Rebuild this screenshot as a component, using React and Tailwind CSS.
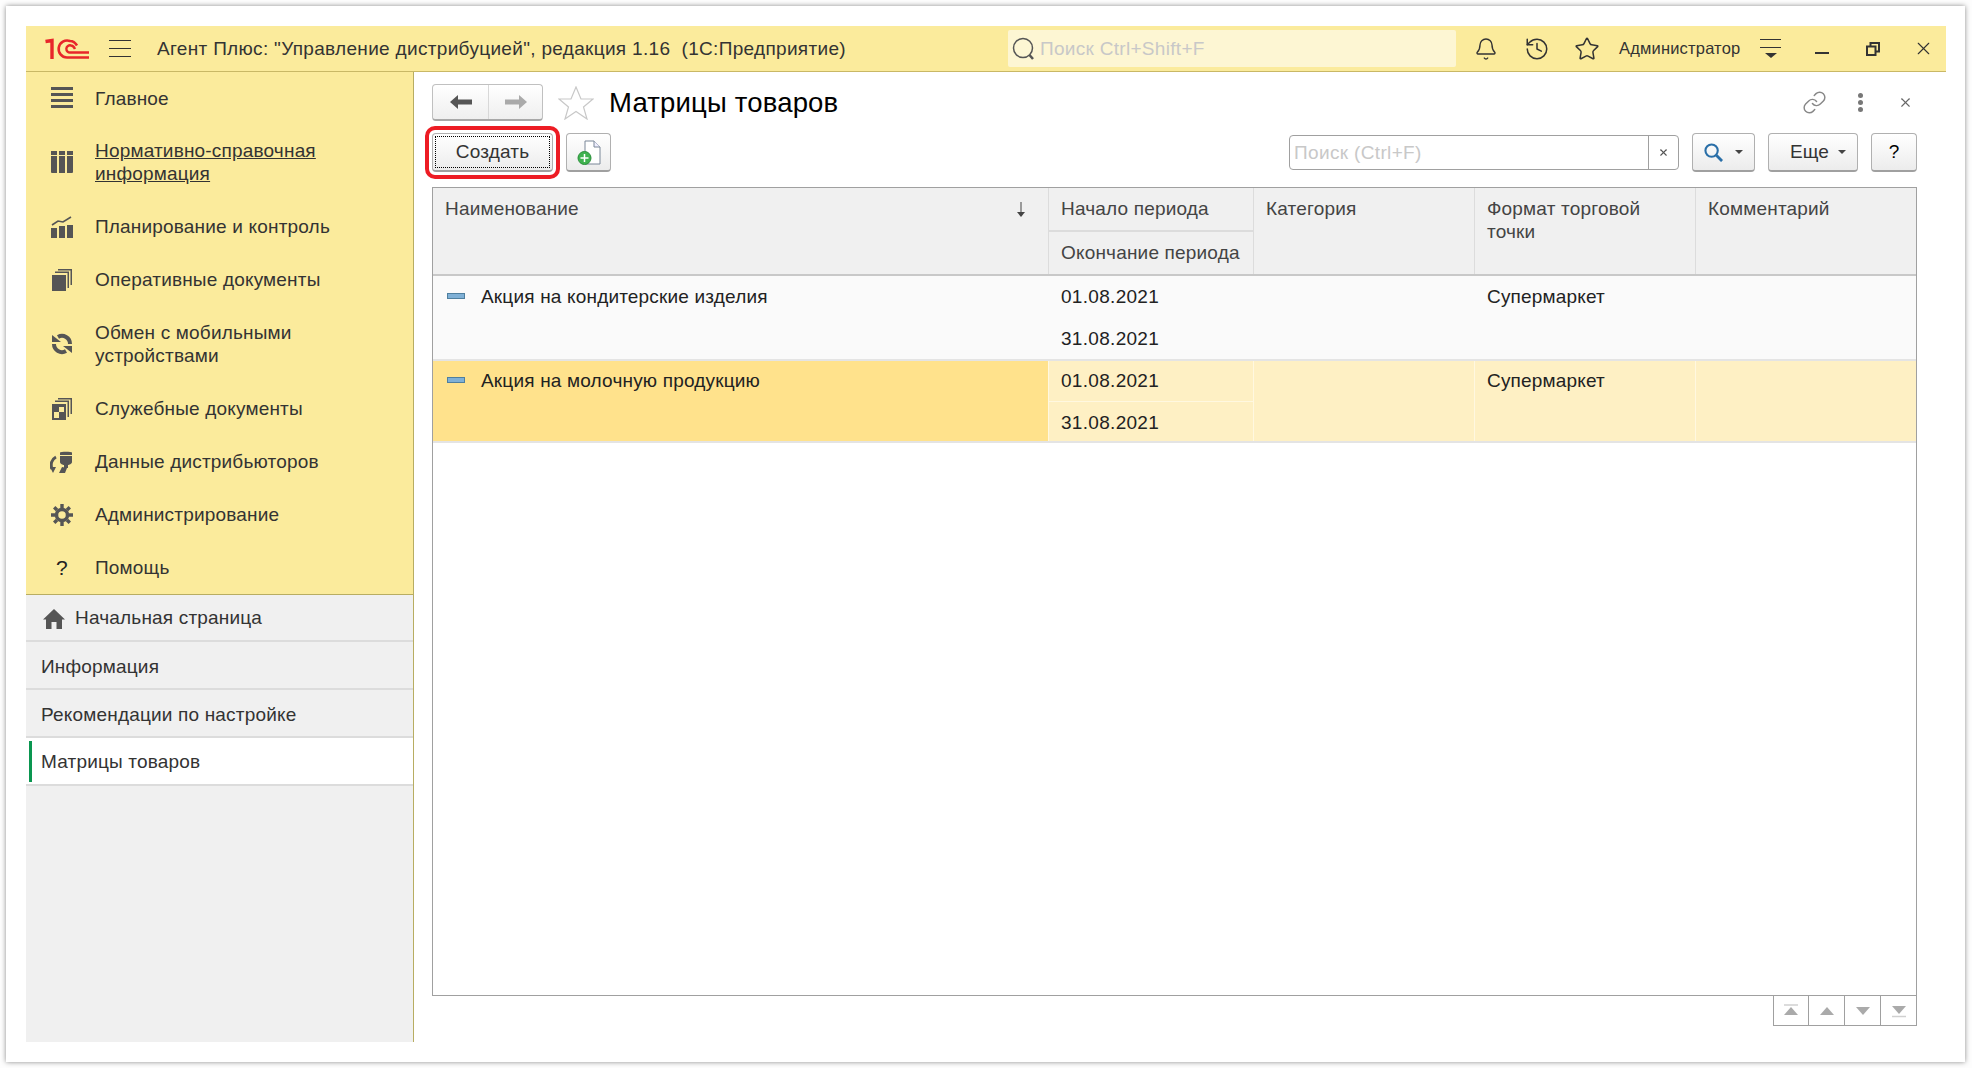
import { Bell, History, Star, Link, X } from "lucide-react";

const icons = {
  main: (
    <svg viewBox="0 0 22 22" className="w-[22px] h-[22px]" fill="#555">
      <rect y="0" width="22" height="3" />
      <rect y="6" width="22" height="3" />
      <rect y="12" width="22" height="3" />
      <rect y="18" width="22" height="3" />
    </svg>
  ),
  book: (
    <svg viewBox="0 0 22 22" className="w-[22px] h-[22px]" fill="#555">
      <path d="M0 0h6v4H0zM8 0h6v4H8zM16 0h6v4h-6z" />
      <path d="M0 5h6v17H1a1 1 0 0 1-1-1zM8 5h6v17H8zM16 5h6v16a1 1 0 0 1-1 1h-5z" />
    </svg>
  ),
  chart: (
    <svg viewBox="0 0 22 22" className="w-[22px] h-[22px]" fill="#555">
      <path d="M0 12h6v10H0zM8 10h6v12H8zM16 9h6v13h-6z" />
      <path d="M1 9l6-4 5 1 8-5" fill="none" stroke="#555" strokeWidth="1.6" />
    </svg>
  ),
  docs: (
    <svg viewBox="0 0 22 22" className="w-[22px] h-[22px]" fill="#555">
      <path d="M1 6h14v16H1z" />
      <path d="M4 4V2.500h14V19h-1.500V4zM7 1.500V0h14v16h-1.500V1.500z" />
    </svg>
  ),
  sync: (
    <svg viewBox="0 0 22 22" className="w-[22px] h-[22px]" fill="none" stroke="#555" strokeWidth="4">
      <path d="M19 11A8 8 0 0 0 7 4" />
      <path d="M3 11A8 8 0 0 0 15 18" />
      <path d="M1 2L10 9H1z" fill="#555" stroke="none" />
      <path d="M21 20L12 13h9z" fill="#555" stroke="none" />
    </svg>
  ),
  service: (
    <svg viewBox="0 0 22 22" className="w-[22px] h-[22px]" fill="#555">
      <path d="M1 6h14v16H1z" />
      <path d="M4 4V2.500h14V19h-1.500V4zM7 1.500V0h14v16h-1.500V1.500z" />
      <path d="M8 9h5v5H8zM3 14h5v6H3z" fill="#fbeb9c" />
    </svg>
  ),
  distrib: (
    <svg viewBox="0 0 24 22" className="w-[24px] h-[22px]" fill="#555">
      <path d="M10 1.500C10 .5 22 .5 22 1.500V4H10zM10 5h12v6c0 2-3 3-4 3v3h-4v-3c-1 0-4-1-4-3z" />
      <path d="M6 6C2 8 0 13 2 18" fill="none" stroke="#555" strokeWidth="3" />
      <path d="M0 16h6l-3 6zM9 22l3-6 5 1-2 5z" />
    </svg>
  ),
  gear: (
    <svg viewBox="0 0 22 22" className="w-[22px] h-[22px]" fill="none" stroke="#555">
      <circle cx="11" cy="11" r="5.500" strokeWidth="3.500" />
      <path d="M11 0v4M11 18v4M0 11h4M18 11h4M3.200 3.200l2.800 2.800M16 16l2.800 2.800M18.800 3.200L16 6M6 16l-2.800 2.800" strokeWidth="3.400" />
    </svg>
  ),
};

const menu = [
  { icon: "main", lines: ["Главное"], h: "h-[52px]" },
  { icon: "book", lines: ["Нормативно-справочная", "информация"], h: "h-[76px]", underline: true },
  { icon: "chart", lines: ["Планирование и контроль"], h: "h-[53px]" },
  { icon: "docs", lines: ["Оперативные документы"], h: "h-[53px]" },
  { icon: "sync", lines: ["Обмен с мобильными", "устройствами"], h: "h-[76px]" },
  { icon: "service", lines: ["Служебные документы"], h: "h-[53px]" },
  { icon: "distrib", lines: ["Данные дистрибьюторов"], h: "h-[53px]" },
  { icon: "gear", lines: ["Администрирование"], h: "h-[53px]" },
  { icon: "help", lines: ["Помощь"], h: "h-[53px]" },
];

function MenuItem({ item }) {
  return (
    <div className={`flex items-center ${item.h}`}>
      <div className="w-[69px] flex justify-center pl-[3px]">
        {item.icon === "help" ? (
          <span className="text-[21px] leading-none text-[#222]">?</span>
        ) : (
          icons[item.icon]
        )}
      </div>
      <div className={`text-[19px] leading-[23px] text-[#333] ${item.underline ? "underline" : ""}`}>
        {item.lines.map((l) => (
          <div key={l}>{l}</div>
        ))}
      </div>
    </div>
  );
}

function Btn({ className, children }) {
  return (
    <div
      className={`h-[39px] flex items-center justify-center rounded-[4px] border-2 border-t border-x border-[#b0b0b0] border-b-[#a0a0a0] bg-linear-to-b from-white to-[#ececec] text-[19px] text-[#333] ${className}`}
    >
      {children}
    </div>
  );
}

function Caret() {
  return <span className="w-0 h-0 border-x-[4px] border-x-transparent border-t-[4px] border-t-[#444]" />;
}

function Dash() {
  return <span className="block w-[18px] h-[6px] bg-[#7fb0d6] border border-[#4f7f9f]" />;
}

function Arrow({ dir }) {
  const paths = {
    first: <><path d="M1 1h14" stroke="#d0d0d0" strokeWidth="1.500" /><path d="M8 3l7 8H1z" fill="#aaa" /></>,
    up: <path d="M8 3l7 8H1z" fill="#aaa" />,
    down: <path d="M8 11L1 3h14z" fill="#aaa" />,
    last: <><path d="M8 10L1 2h14z" fill="#aaa" /><path d="M1 12.500h14" stroke="#d0d0d0" strokeWidth="1.500" /></>,
  };
  return (
    <div className="w-[36px] h-[30px] flex items-center justify-center border-r border-b border-[#a0a0a0] first:border-l">
      <svg viewBox="0 0 16 14" className="w-[16px] h-[14px]">{paths[dir]}</svg>
    </div>
  );
}

export default function App() {
  return (
    <div className="h-[1068px] w-[1972px] bg-[#fdfdfd] pl-[6px] pt-[6px] overflow-hidden tracking-[0.18px] font-['Liberation_Sans',Arial,sans-serif]">
      <div className="w-[1959px] h-[1056px] bg-white p-[20px] shadow-[0_0_5px_rgba(0,0,0,0.45)]">
        <div className="w-[1920px] h-[1016px] flex flex-col">
          {/* шапка */}
          <header className="h-[46px] shrink-0 flex items-center bg-[#fbeb9c] border-b border-[#c9b866]">
            <svg viewBox="0 0 44 22" className="ml-[19px] w-[44px] h-[22px]" fill="none" stroke="#e8262a">
              <path d="M0.500 3.500L7 2.500V21" strokeWidth="3.400" />
              <path d="M44 19.500H22A8.500 8.500 0 1 1 25 3c3 0 5.500 2 7 4.500" strokeWidth="2.600" />
              <path d="M44 14.500H25.500A3.600 3.600 0 1 1 26 7.500c2 0 3 1.500 4 3.500" strokeWidth="2.400" />
            </svg>
            <div className="ml-[20px] w-[22px] flex flex-col gap-[7px]">
              <span className="block h-px bg-[#333]" />
              <span className="block h-px bg-[#333]" />
              <span className="block h-px bg-[#333]" />
            </div>
            <div className="ml-[26px] w-[851px] pt-[2px] text-[19px] tracking-[0.32px] text-[#333] whitespace-pre">
              {'Агент Плюс: "Управление дистрибуцией", редакция 1.16  (1С:Предприятие)'}
            </div>
            <div className="w-[448px] h-[37px] flex items-center rounded-[2px] bg-[#fdf6d3]">
              <svg viewBox="0 0 23 23" className="ml-[4px] w-[23px] h-[23px]" fill="none" stroke="#555">
                <circle cx="11" cy="11" r="9.500" strokeWidth="1.500" />
                <path d="M17.500 18l3.500 4" strokeWidth="2.500" />
              </svg>
              <span className="ml-[5px] pt-[2px] text-[19px] tracking-[0.3px] text-[#c8c8c8]">Поиск Ctrl+Shift+F</span>
            </div>
            <Bell className="ml-[18px] w-[24px] h-[24px] text-[#333]" strokeWidth={1.4} />
            <History className="ml-[26px] w-[26px] h-[26px] text-[#333]" strokeWidth={1.4} />
            <Star className="ml-[24px] w-[26px] h-[26px] text-[#333]" strokeWidth={1.4} />
            <span className="ml-[19px] w-[120px] text-[16.500px] text-[#333] whitespace-nowrap">Администратор</span>
            <div className="ml-[21px] w-[21px] flex flex-col items-center">
              <span className="block w-full h-px bg-[#333]" />
              <span className="block w-full h-px bg-[#333] mt-[7px]" />
              <span className="mt-[5px] w-0 h-0 border-x-[6px] border-x-transparent border-t-[5px] border-t-[#333]" />
            </div>
            <span className="ml-[34px] mt-[8px] block w-[14px] h-[2px] bg-[#333]" />
            <svg viewBox="0 0 14 14" className="ml-[37px] w-[14px] h-[14px]" fill="none" stroke="#333" strokeWidth="2">
              <path d="M1 4.500h8.500V13H1zM4.500 4V1H13v8.500h-3" />
            </svg>
            <X className="ml-[33px] w-[21px] h-[21px] text-[#333]" strokeWidth={1.3} />
          </header>

          <div className="flex-1 flex min-h-0">
            {/* боковая панель */}
            <aside className="w-[388px] shrink-0 flex flex-col border-r border-[#b8ad62] bg-[#f0f0f0]">
              <div className="bg-[#fbeb9c] border-b border-[#b8ad62]">
                {menu.map((item) => (
                  <MenuItem key={item.lines[0]} item={item} />
                ))}
              </div>
              <div className="h-[47px] pt-[2px] flex items-center border-b-2 border-[#dcdcdc] text-[19px] text-[#333]">
                <svg viewBox="0 0 22 20" className="ml-[17px] w-[22px] h-[20px]" fill="#555">
                  <path d="M11 0l11 10.500h-3V20h-5.500v-7h-5v7H3v-9.500H0z" />
                </svg>
                <span className="ml-[10px]">Начальная страница</span>
              </div>
              <div className="h-[48px] pt-[4px] flex items-center pl-[15px] border-b-2 border-[#dcdcdc] text-[19px] text-[#333]">
                Информация
              </div>
              <div className="h-[48px] pt-[4px] flex items-center pl-[15px] border-b-2 border-[#dcdcdc] text-[19px] text-[#333]">
                Рекомендации по настройке
              </div>
              <div className="h-[48px] flex items-center bg-white border-b-2 border-[#dcdcdc] text-[19px] text-[#333]">
                <span className="ml-[3px] w-[3px] h-[41px] bg-[#0a9650]" />
                <span className="ml-[9px] pt-[2px]">Матрицы товаров</span>
              </div>
            </aside>

            {/* содержимое */}
            <main className="flex-1 bg-white pl-[18px] pr-[29px] pt-[12px]">
              <div className="h-[37px] flex items-center">
                <div className="w-[111px] h-[37px] flex rounded-[4px] border border-[#c0c0c0] border-b-[#a8a8a8] border-b-2 bg-linear-to-b from-white to-[#efefef]">
                  <div className="w-[56px] flex items-center justify-center border-r border-[#d8d8d8]">
                    <svg viewBox="0 0 22 14" className="w-[22px] h-[14px]" fill="#555">
                      <path d="M8 0v4.500h14v5H8V14L0 7z" />
                    </svg>
                  </div>
                  <div className="flex-1 flex items-center justify-center">
                    <svg viewBox="0 0 22 14" className="w-[22px] h-[14px]" fill="#aaa">
                      <path d="M14 0v4.500H0v5h14V14l8-7z" />
                    </svg>
                  </div>
                </div>
                <svg viewBox="0 0 36 34" className="ml-[15px] w-[36px] h-[34px]" fill="none" stroke="#c8c8c8" strokeWidth="1.200">
                  <path d="M18 1l5 12h12l-9.500 8 3.500 12-11-7.500L7 33l3.500-12L1 13h12z" />
                </svg>
                <h1 className="ml-[15px] flex-1 text-[27.500px] font-normal text-black">Матрицы товаров</h1>
                <Link className="w-[25px] h-[25px] text-[#888]" strokeWidth={1.4} />
                <div className="ml-[31px] flex flex-col gap-[2px]">
                  <span className="block w-[5px] h-[5px] rounded-full bg-[#777]" />
                  <span className="block w-[5px] h-[5px] rounded-full bg-[#777]" />
                  <span className="block w-[5px] h-[5px] rounded-full bg-[#777]" />
                </div>
                <X className="ml-[35px] mr-[4px] w-[15px] h-[15px] text-[#666]" strokeWidth={1.8} />
              </div>

              <div className="mt-[12px] h-[39px] flex items-center">
                <div className="relative">
                  <Btn className="w-[121px] border-2 border-[#a8a8a8] p-[2px]">
                    <span className="w-full h-full flex items-center justify-center border border-dotted border-black">
                      Создать
                    </span>
                  </Btn>
                  <span className="absolute inset-[-7px] rounded-[10px] border-[4px] border-[#ed1c24]" />
                </div>
                <Btn className="ml-[13px] w-[45px]">
                  <svg viewBox="0 0 24 26" className="w-[24px] h-[26px] mt-[2px]">
                    <path d="M8 1h9l6 6v17H8z" fill="#fff" stroke="#7a8798" />
                    <path d="M17 1v6h6" fill="#eef" stroke="#7a8798" />
                    <circle cx="7.500" cy="18" r="6.500" fill="#3fb24f" stroke="#2a8f3a" />
                    <path d="M7.500 14v8M3.500 18h8" stroke="#fff" strokeWidth="1.500" />
                  </svg>
                </Btn>
                <div className="ml-auto w-[390px] h-[35px] flex rounded-[4px] border border-[#a0a0a0] bg-white">
                  <span className="flex-1 pl-[4px] leading-[33px] text-[19px] tracking-[0.35px] text-[#c8c8c8]">Поиск (Ctrl+F)</span>
                  <div className="w-[30px] flex items-center justify-center border-l border-[#a0a0a0]">
                    <X className="w-[11px] h-[11px] text-[#555]" strokeWidth={2.4} />
                  </div>
                </div>
                <Btn className="ml-[13px] w-[63px] gap-[12px]">
                  <svg viewBox="0 0 20 20" className="w-[19px] h-[19px]" fill="none" stroke="#2a6fa8">
                    <circle cx="8" cy="8" r="6.500" strokeWidth="2.200" />
                    <path d="M13 13l6 6" strokeWidth="3" />
                  </svg>
                  <Caret />
                </Btn>
                <Btn className="ml-[13px] w-[90px] gap-[9px] pl-[10px]">
                  <span>Еще</span>
                  <Caret />
                </Btn>
                <Btn className="ml-[13px] w-[46px]">
                  <span className="text-black">?</span>
                </Btn>
              </div>

              {/* таблица */}
              <div className="mt-[15px] h-[809px] border border-[#a0a0a0] text-[19px]">
                <div className="h-[88px] grid grid-cols-[615px_206px_221px_221px_1fr] bg-[#f0f0f0] border-b-2 border-[#c8c8c8] text-[#444]">
                  <div className="flex justify-between pl-[12px] pr-[23px] pt-[9px] leading-[23px]">
                    <span>Наименование</span>
                    <svg viewBox="0 0 8 15" className="w-[8px] h-[15px] mt-[5px]" fill="#444">
                      <path d="M3.500 0h1v11h-1z" />
                      <path d="M0 10h8l-4 5z" />
                    </svg>
                  </div>
                  <div className="flex flex-col border-x border-[#dcdcdc]">
                    <div className="h-[44px] pl-[12px] pt-[9px] leading-[23px] border-b-2 border-[#dcdcdc]">Начало периода</div>
                    <div className="pl-[12px] pt-[9px] leading-[23px]">Окончание периода</div>
                  </div>
                  <div className="pl-[12px] pt-[9px] leading-[23px] border-r border-[#dcdcdc]">Категория</div>
                  <div className="pl-[12px] pt-[9px] leading-[23px] border-r border-[#dcdcdc]">
                    Формат торговой
                    <br />
                    точки
                  </div>
                  <div className="pl-[12px] pt-[9px] leading-[23px]">Комментарий</div>
                </div>

                <div className="h-[85px] grid grid-cols-[615px_206px_221px_221px_1fr] bg-[#fafafa] border-b-2 border-[#e4e4e4] text-[#222] leading-[23px]">
                  <div className="flex pl-[14px] pt-[9px]">
                    <span className="mt-[8px]"><Dash /></span>
                    <span className="ml-[16px]">Акция на кондитерские изделия</span>
                  </div>
                  <div className="pl-[13px] pt-[9px] tracking-[0.3px]">
                    <div>01.08.2021</div>
                    <div className="mt-[19px]">31.08.2021</div>
                  </div>
                  <div />
                  <div className="pl-[12px] pt-[9px]">Супермаркет</div>
                  <div />
                </div>

                <div className="h-[82px] grid grid-cols-[615px_206px_221px_221px_1fr] border-b-2 border-[#e4e4e4] text-[#222] leading-[23px]">
                  <div className="flex pl-[14px] pt-[8px] bg-[#ffe28c]">
                    <span className="mt-[8px]"><Dash /></span>
                    <span className="ml-[16px]">Акция на молочную продукцию</span>
                  </div>
                  <div className="bg-[#fef0c4] border-x border-[#fff8e0] tracking-[0.3px]">
                    <div className="h-[41px] pl-[12px] pt-[8px] border-b border-[#fff8e0]">01.08.2021</div>
                    <div className="pl-[12px] pt-[9px]">31.08.2021</div>
                  </div>
                  <div className="bg-[#fef0c4] border-r border-[#fff8e0]" />
                  <div className="bg-[#fef0c4] border-r border-[#fff8e0] pl-[12px] pt-[8px]">Супермаркет</div>
                  <div className="bg-[#fef0c4]" />
                </div>
              </div>

              <div className="flex justify-end">
                <Arrow dir="first" />
                <Arrow dir="up" />
                <Arrow dir="down" />
                <Arrow dir="last" />
              </div>
            </main>
          </div>
        </div>
      </div>
    </div>
  );
}
